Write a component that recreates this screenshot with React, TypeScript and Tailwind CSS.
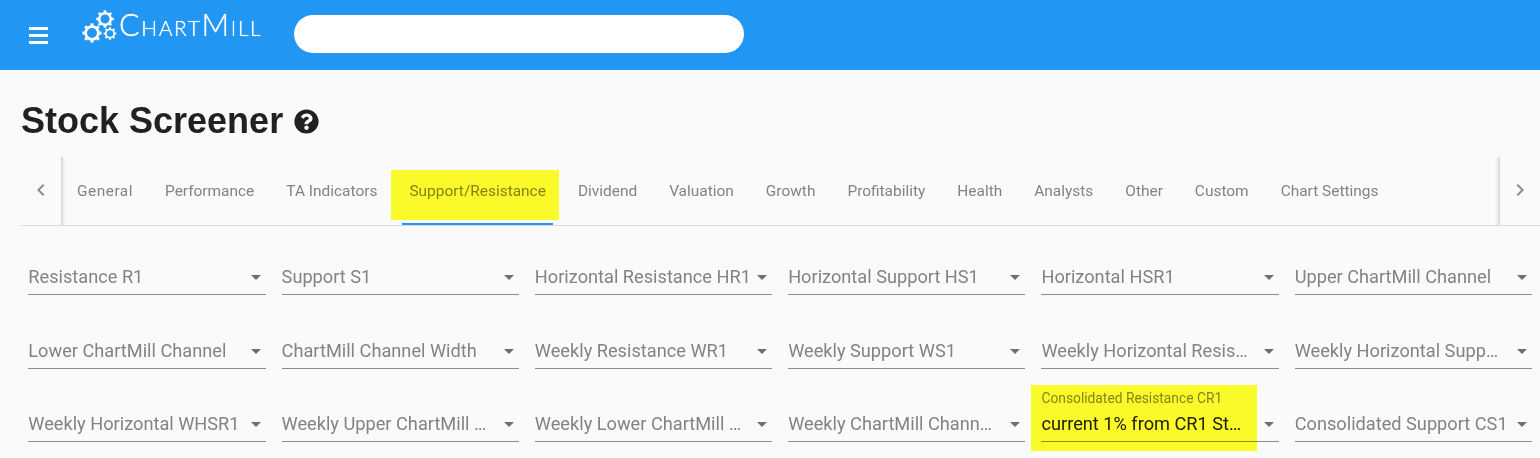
import React from "react";
import { FaQuestionCircle } from "react-icons/fa";

const tabs = ["General","Performance","TA Indicators","Support/Resistance","Dividend","Valuation","Growth","Profitability","Health","Analysts","Other","Custom","Chart Settings"];
const fields = [
  "Resistance R1","Support S1","Horizontal Resistance HR1","Horizontal Support HS1","Horizontal HSR1","Upper ChartMill Channel",
  "Lower ChartMill Channel","ChartMill Channel Width","Weekly Resistance WR1","Weekly Support WS1","Weekly Horizontal Resistance WHR1","Weekly Horizontal Support WHS1",
  "Weekly Horizontal WHSR1","Weekly Upper ChartMill Channel","Weekly Lower ChartMill Channel","Weekly ChartMill Channel Width","Consolidated Resistance CR1","Consolidated Support CS1",
];
const clipped = ["Weekly Horizontal Resistance WHR1","Weekly Horizontal Support WHS1","Weekly Upper ChartMill Channel","Weekly Lower ChartMill Channel","Weekly ChartMill Channel Width"];

function Gear({ cx, cy, r }: { cx: number; cy: number; r: number }) {
  const teeth = Array.from({ length: 8 }, (_, i) => i * 45);
  return (
    <g fill="none" stroke="#fff">
      <circle cx={cx} cy={cy} r={r} strokeWidth={r * 0.44} />
      {teeth.map((a) => (
        <line key={a} x1={cx} y1={cy - r} x2={cx} y2={cy - r * 1.5} strokeWidth={r * 0.46} transform={`rotate(${a} ${cx} ${cy})`} />
      ))}
    </g>
  );
}

function Chevron({ right }: { right?: boolean }) {
  return (
    <svg width="24" height="24" viewBox="0 0 24 24" className="fill-[#8c8c8c]">
      <path d={right ? "M8.59 16.59L13.17 12 8.59 7.41 10 6l6 6-6 6-1.41-1.41z" : "M15.41 16.59L10.83 12l4.58-4.59L14 6l-6 6 6 6 1.41-1.41z"} />
    </svg>
  );
}

function Field({ label }: { label: string }) {
  const active = label === "Consolidated Resistance CR1";
  const inset = active ? "right-[33px]" : clipped.includes(label) ? "right-[29px]" : "right-[20px]";
  return (
    <div className="px-2">
      <div className="relative h-[53px] border-b border-[#8c8c8c]">
        {active && <div className="absolute left-0 top-[2px] text-[13.8px] leading-[14px] text-[#858585] whitespace-nowrap">{label}</div>}
        <div className={`absolute left-0 top-[22px] truncate text-[18.2px] leading-[26px] ${inset} ${active ? "text-[#212121]" : "text-[#838383]"}`}>
          {active ? "current 1% from CR1 Strong" : label}
        </div>
        <div className="absolute right-[5px] top-[33px] w-0 h-0 border-x-[5px] border-x-transparent border-t-[5px] border-t-[#6f6f6f]" />
      </div>
    </div>
  );
}

export default function App() {
  return (
    <div className="relative w-[1540px] h-[458px] overflow-hidden bg-[#fafafa] font-['Roboto',sans-serif]">
      <header className="h-[70px] bg-[#2196f3] flex items-start">
        <div className="ml-[29px] mt-[27px] w-[19px] flex flex-col gap-[4px]">
          <div className="h-[3px] bg-white" />
          <div className="h-[3px] bg-white" />
          <div className="h-[3px] bg-white" />
        </div>
        <div className="ml-[34px] mt-[10px] w-[180px] flex items-start">
          <svg width="37" height="34" viewBox="0 0 37 34" className="shrink-0">
            <Gear cx={23} cy={9} r={5.8} />
            <Gear cx={10} cy={23} r={6.4} />
            <Gear cx={28} cy={23.5} r={4.2} />
          </svg>
          <span className="-mt-[3px] font-['Lato',sans-serif] font-light text-white text-[30.5px] leading-[34px] tracking-[1.6px] [font-variant:small-caps] [text-shadow:0_0_1px_#fff] whitespace-nowrap">ChartMill</span>
        </div>
        <div className="ml-[32px] mt-[15px] w-[450px] h-[38px] rounded-full bg-white" />
      </header>

      <main>
        <div className="pl-[21px] pt-[30px] h-[87px] flex items-start">
          <h1 className="font-['Liberation_Sans',sans-serif] font-bold text-[36px] leading-[41px] text-[#212121]">Stock Screener</h1>
          <FaQuestionCircle className="ml-[11px] mt-[9px] text-[25px] text-[#212121]" />
        </div>

        <div className="ml-[21px] h-[69px] flex border-b border-[#dcdcdc]">
          <div className="w-10 h-[68px] flex items-center justify-center pb-[2px] shrink-0"><Chevron /></div>
          <div className="flex-1 flex h-[68px] shadow-[inset_5px_0_4px_-4px_rgba(0,0,0,0.22),inset_-5px_0_4px_-4px_rgba(0,0,0,0.22)]">
            {tabs.map((t) => (
              <div key={t} className={`relative px-4 h-full flex items-center pt-[2px] text-[15.45px] text-[#838383] whitespace-nowrap ${t === "General" ? "tracking-[0.5px]" : ""}`}>
                {t}
                {t === "Support/Resistance" && <div className="absolute left-[9px] right-[9px] bottom-0 h-[2px] bg-[#2196f3]" />}
              </div>
            ))}
          </div>
          <div className="w-10 h-[68px] flex items-center justify-center pb-[2px] shrink-0"><Chevron right /></div>
        </div>

        <div className="ml-[20.3px] grid grid-cols-6 gap-y-[20.5px] pt-[16px]">
          {fields.map((f) => <Field key={f} label={f} />)}
        </div>
      </main>

      <div className="absolute left-[391px] top-[170px] w-[168px] h-[50px] bg-[#ffff2c] mix-blend-multiply pointer-events-none" />
      <div className="absolute left-[1031px] top-[385px] w-[226px] h-[66px] bg-[#ffff2c] mix-blend-multiply pointer-events-none" />
    </div>
  );
}
